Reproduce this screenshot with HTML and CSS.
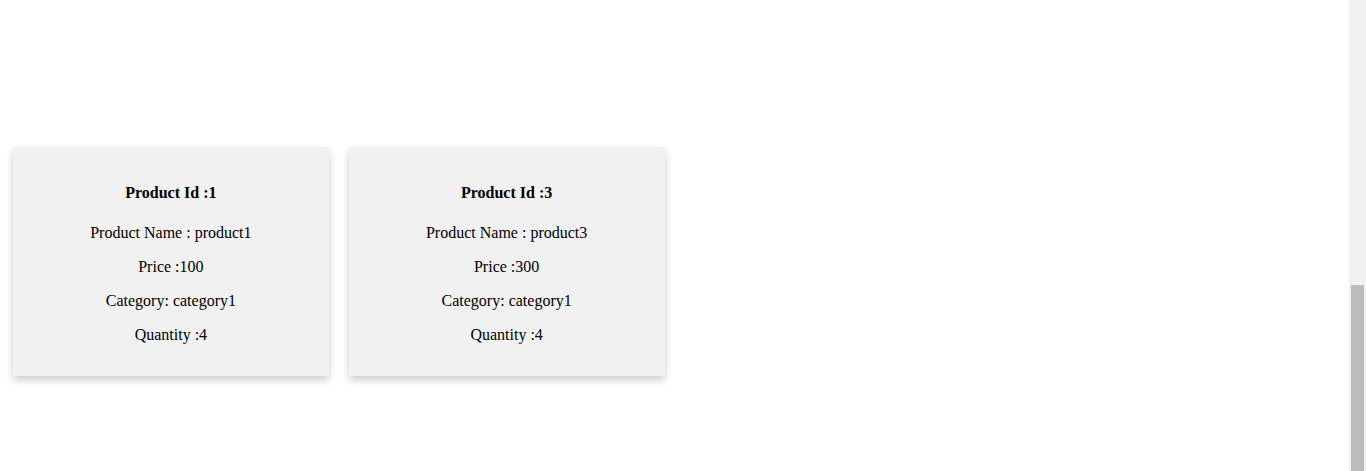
FILE: index.html
```html
<!DOCTYPE html>
<html lang="en">
<head>
<meta charset="utf-8">
<title>Products</title>
<link rel="stylesheet" href="styles.css">
</head>
<body>
<div class="viewport">
  <main class="catalog">
    <div class="row">
      <div class="column">
        <div class="card">
          <h4>Product Id :1</h4>
          <p>Product Name : product1</p>
          <p>Price :100</p>
          <p>Category: category1</p>
          <p>Quantity :4</p>
        </div>
      </div>
      <div class="column">
        <div class="card">
          <h4>Product Id :3</h4>
          <p>Product Name : product3</p>
          <p>Price :300</p>
          <p>Category: category1</p>
          <p>Quantity :4</p>
        </div>
      </div>
    </div>
  </main>
  <div class="scrollbar" aria-hidden="true">
    <div class="scrollbar-thumb"></div>
  </div>
</div>
</body>
</html>
```
FILE: styles.css
```css
html, body {
  height: 100%;
  overflow: hidden;
}
body {
  margin: 0;
  font-family: "Liberation Serif", "Times New Roman", serif;
  font-size: 16px;
  line-height: 18px;
  color: #000;
  background: #fff;
}
.viewport {
  display: flex;
  height: 100%;
}
.catalog {
  flex: 1;
  min-width: 0;
  padding: 147px 8px 8px;
}
.scrollbar {
  width: 17px;
  flex: none;
  background: #f1f1f1;
  display: flex;
  flex-direction: column;
  justify-content: flex-end;
}
.scrollbar-thumb {
  height: 186px;
  margin: 0 2px;
  background: #bcbcbc;
}
.row {
  display: flex;
  margin: 0 -5px;
}
.column {
  box-sizing: border-box;
  width: 25%;
  padding: 0 10px;
}
.card {
  background: #f1f1f1;
  box-shadow: 0 4px 8px 0 rgba(0, 0, 0, 0.2);
  padding: 16px;
  text-align: center;
}
.card h4 {
  margin: 1.33em 0;
  font-size: 16px;
  font-weight: bold;
}
.card p {
  margin: 16px 0;
}
```
